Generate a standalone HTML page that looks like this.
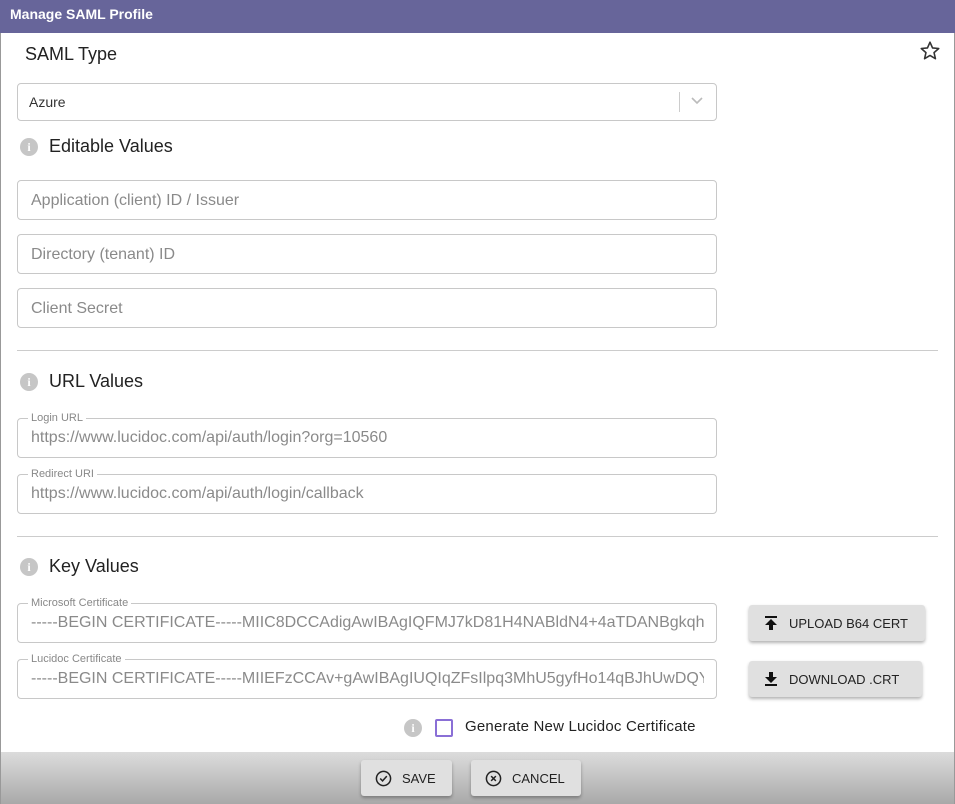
<!DOCTYPE html>
<html><head><meta charset="utf-8"><style>
*{box-sizing:border-box}
body{margin:0;width:955px;height:804px;position:relative;overflow:hidden;background:#fff;font-family:"Liberation Sans",sans-serif}
.frame{position:absolute;left:0;top:0;width:955px;height:804px;border-left:1px solid #999;border-right:1px solid #999}
.hdr{position:absolute;left:0;top:0;width:955px;height:33px;background:#67659a;color:#fff;font-weight:bold;font-size:14px;padding:6px 0 0 10px}
.t{position:absolute;font-size:18px;color:#222}
.f{position:absolute;left:17px;width:700px;height:40px;border:1px solid #c8c8c8;border-radius:4px;font-size:16px;color:#8a8a8a;padding:10px 0 0 13px}
.f .v{display:block;white-space:nowrap;overflow:hidden;width:673px}
.lbl{position:absolute;top:-8px;left:10px;background:#fff;font-size:11px;color:#888;padding:0 3px;line-height:14px}
.hr{position:absolute;left:17px;width:921px;height:1px;background:#ccc}
.i{position:absolute;width:18px;height:18px;border-radius:50%;background:#c6c6c6;color:#fff;font-size:12px;font-weight:bold;text-align:center;line-height:18px;font-family:"Liberation Serif",serif}
.btn{position:absolute;height:36px;background:#e0e0e0;border-radius:3px;box-shadow:0 2px 3px rgba(0,0,0,.3);font-size:13px;color:#222;display:flex;align-items:center}
.ftr{position:absolute;left:1px;top:752px;width:953px;height:52px;background:linear-gradient(#dcdcdc,#a9a9a9)}
</style></head><body>
<div class="frame"></div>
<div class="hdr">Manage SAML Profile</div>
<div class="t" style="left:25px;top:44px">SAML Type</div>
<svg style="position:absolute;left:919px;top:40px" width="22" height="21" viewBox="0 0 24 24"><path d="M12 2.5l2.9 6.6 7.1.6-5.4 4.7 1.6 7-6.2-3.7-6.2 3.7 1.6-7L2 9.7l7.1-.6z" fill="none" stroke="#333" stroke-width="1.8" stroke-linejoin="round"/></svg>
<div class="f" style="top:83px;height:38px;font-size:14px;color:#333;padding-top:10px;padding-left:11px">Azure</div>
<div style="position:absolute;left:679px;top:92px;width:1px;height:20px;background:#ccc"></div>
<svg style="position:absolute;left:691px;top:97px" width="12" height="8" viewBox="0 0 12 8"><path d="M1 1l5 5 5-5" fill="none" stroke="#bbb" stroke-width="1.6"/></svg>
<div class="i" style="left:20px;top:138px">i</div>
<div class="t" style="left:49px;top:136px">Editable Values</div>
<div class="f" style="top:180px;padding-top:11px">Application (client) ID / Issuer</div>
<div class="f" style="top:234px;padding-top:11px">Directory (tenant) ID</div>
<div class="f" style="top:288px;padding-top:11px">Client Secret</div>
<div class="hr" style="top:350px"></div>
<div class="i" style="left:20px;top:373px">i</div>
<div class="t" style="left:49px;top:371px">URL Values</div>
<div class="f" style="top:418px"><span class="lbl">Login URL</span><span class="v">https://www.lucidoc.com/api/auth/login?org=10560</span></div>
<div class="f" style="top:474px"><span class="lbl">Redirect URI</span><span class="v">https://www.lucidoc.com/api/auth/login/callback</span></div>
<div class="hr" style="top:536px"></div>
<div class="i" style="left:20px;top:558px">i</div>
<div class="t" style="left:49px;top:556px">Key Values</div>
<div class="f" style="top:603px"><span class="lbl">Microsoft Certificate</span><span class="v">-----BEGIN CERTIFICATE-----MIIC8DCCAdigAwIBAgIQFMJ7kD81H4NABldN4+4aTDANBgkqhkiG9w0B</span></div>
<div class="f" style="top:659px"><span class="lbl">Lucidoc Certificate</span><span class="v">-----BEGIN CERTIFICATE-----MIIEFzCCAv+gAwIBAgIUQIqZFsIlpq3MhU5gyfHo14qBJhUwDQYJKoZI</span></div>
<div class="btn" style="left:749px;top:605px;width:176px;padding-left:15px"><svg width="14" height="16" viewBox="0 0 14 16" style="margin-right:11px"><rect x="1" y="1" width="12" height="2" fill="#111"/><path d="M7 4l6 6H9v5H5v-5H1z" fill="#111"/></svg>UPLOAD B64 CERT</div>
<div class="btn" style="left:749px;top:661px;width:173px;padding-left:15px"><svg width="14" height="16" viewBox="0 0 14 16" style="margin-right:11px"><path d="M5 1h4v5h4l-6 6-6-6h4z" fill="#111"/><rect x="1" y="13" width="12" height="2" fill="#111"/></svg>DOWNLOAD .CRT</div>
<div class="i" style="left:404px;top:719px">i</div>
<div style="position:absolute;left:435px;top:719px;width:18px;height:18px;border:2px solid #8a6fd6;border-radius:2px"></div>
<div style="position:absolute;left:465px;top:718px;font-size:15px;color:#222;letter-spacing:.2px">Generate New Lucidoc Certificate</div>
<div class="ftr"></div>
<div class="btn" style="left:361px;top:760px;width:91px;padding-left:14px"><svg width="17" height="17" viewBox="0 0 18 18" style="margin-right:10px"><circle cx="9" cy="9" r="7.5" fill="none" stroke="#222" stroke-width="1.6"/><path d="M5.5 9l2.5 2.5 4.5-5" fill="none" stroke="#222" stroke-width="1.6"/></svg>SAVE</div>
<div class="btn" style="left:471px;top:760px;width:110px;padding-left:14px"><svg width="17" height="17" viewBox="0 0 18 18" style="margin-right:10px"><circle cx="9" cy="9" r="7.5" fill="none" stroke="#222" stroke-width="1.6"/><path d="M6.5 6.5l5 5M11.5 6.5l-5 5" stroke="#222" stroke-width="1.6"/></svg>CANCEL</div>
</body></html>
